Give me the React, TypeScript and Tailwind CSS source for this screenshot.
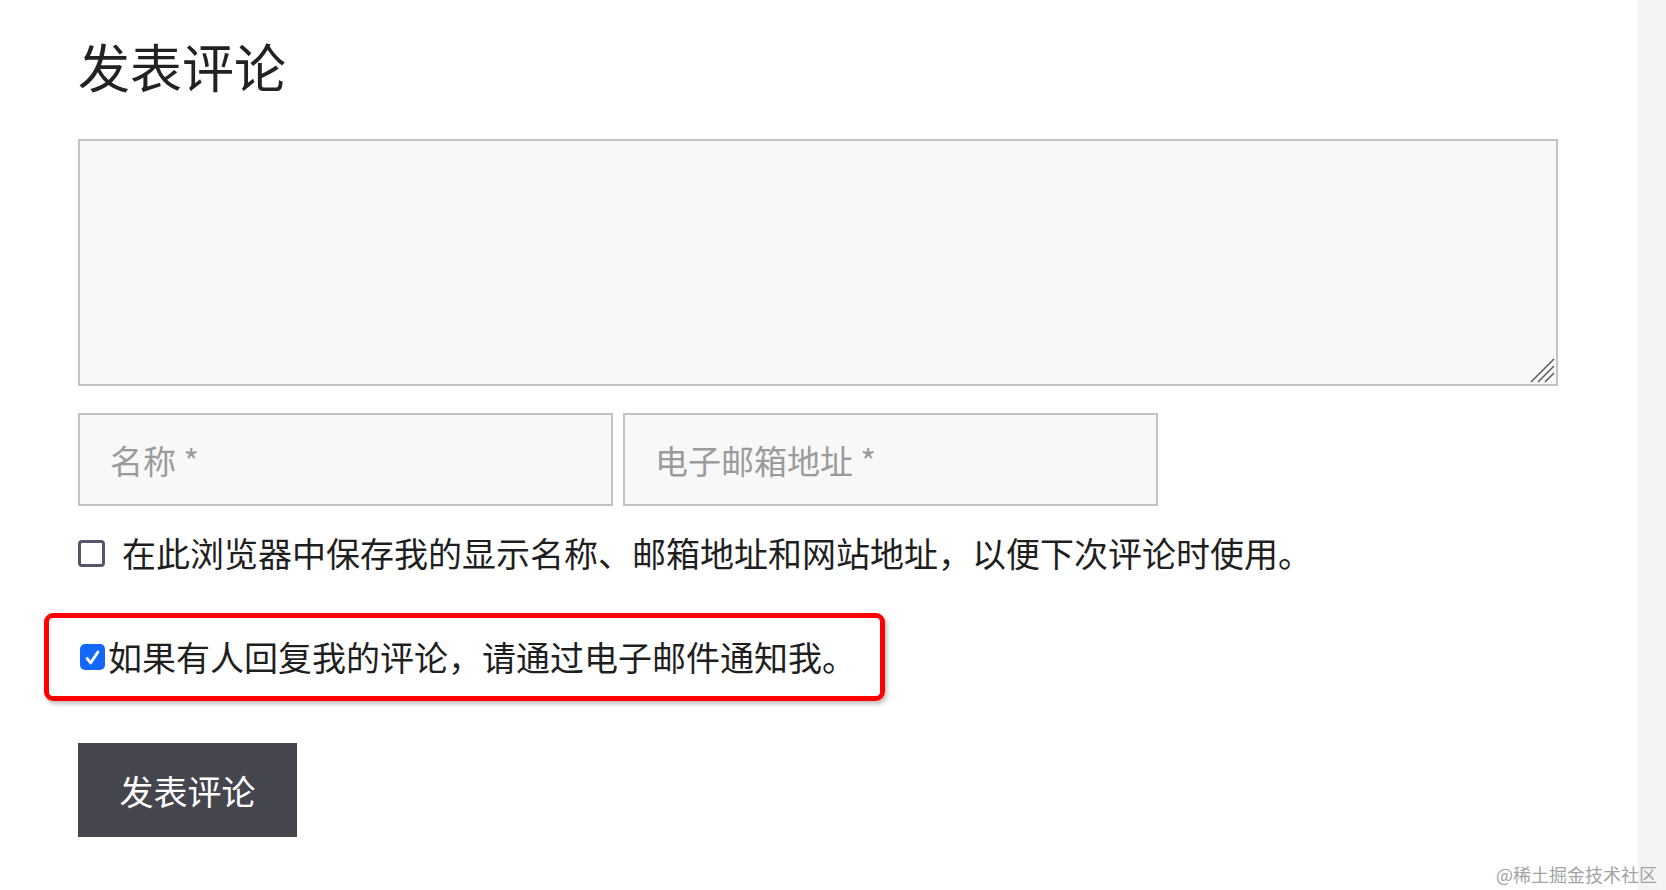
import { useState } from 'react';

const fontStack = '[font-family:"Noto_Sans_CJK_SC","Noto_Sans",sans-serif]';

const ResizeGrip = () => (
  <svg
    className="pointer-events-none absolute right-[3px] bottom-[3px]"
    width="26"
    height="26"
    viewBox="0 0 26 26"
  >
    <path
      d="M2 25 L25 2 M9 25 L25 9 M16 25 L25 16"
      stroke="#5f5f5f"
      strokeWidth="1.6"
      fill="none"
    />
  </svg>
);

const App = () => {
  const [save, setSave] = useState(false);
  const [notify, setNotify] = useState(true);

  return (
    <div className={`relative flex min-h-screen bg-white text-[#1f1f1f] ${fontStack}`}>
      <main className="flex-1 pt-[35px] pr-[80px] pl-[78px]">
        <h3 className="text-[52px] leading-[62px] font-normal text-[#222]">发表评论</h3>

        <div className="relative mt-[42px]">
          <textarea
            className="block h-[247px] w-full resize-none border-2 border-[#c3c3c3] bg-[#f8f8f8] p-4
              text-[32px] outline-none"
          />
          <ResizeGrip />
        </div>

        <div className="mt-[27px] flex gap-[10px]">
          <input
            placeholder="名称 *"
            className="h-[93px] w-[535px] border-2 border-[#c3c3c3] bg-[#f8f8f8] pl-[30px] text-[33px]
              outline-none placeholder:text-[#9b9b9b]"
          />
          <input
            placeholder="电子邮箱地址 *"
            className="h-[93px] w-[535px] border-2 border-[#c3c3c3] bg-[#f8f8f8] pl-[30px] text-[33px]
              outline-none placeholder:text-[#9b9b9b]"
          />
        </div>

        <label
          className="mt-[25px] flex h-[44px] cursor-pointer items-center gap-[17px] text-[34px] leading-[44px]"
          onClick={() => setSave(!save)}
        >
          <span
            className="box-border flex h-[27px] w-[27px] shrink-0 items-center justify-center rounded-[4px]
              border-[3px] border-[#55566a] bg-white"
          >
            {save && (
              <svg width="16" height="16" viewBox="0 0 16 16">
                <path d="M3 8.5 L6.5 12 L13 4" stroke="#55566a" strokeWidth="2.4" fill="none" />
              </svg>
            )}
          </span>
          <span>在此浏览器中保存我的显示名称、邮箱地址和网站地址，以便下次评论时使用。</span>
        </label>

        <div
          className="mt-[38px] -ml-[34px] flex h-[88px] w-[841px] items-center rounded-[9px] border-[5px]
            border-[#ff0000] pl-[31px] shadow-[2px_3px_4px_rgba(0,0,0,0.25)]"
        >
          <label
            className="flex cursor-pointer items-center gap-[3px] text-[34px] leading-[44px]"
            onClick={() => setNotify(!notify)}
          >
            <span
              className={`flex h-[26px] w-[25px] shrink-0 items-center justify-center rounded-[5px] ${
                notify ? 'bg-[#1467fb]' : 'border-2 border-[#55566a] bg-white'
              }`}
            >
              {notify && (
                <svg width="19" height="19" viewBox="0 0 16 16">
                  <path
                    d="M3.4 8.8 L6.4 12.6 L12.6 3.4"
                    stroke="white"
                    strokeWidth="2.4"
                    strokeLinecap="round"
                    strokeLinejoin="round"
                    fill="none"
                  />
                </svg>
              )}
            </span>
            <span>如果有人回复我的评论，请通过电子邮件通知我。</span>
          </label>
        </div>

        <button
          className="mt-[42px] flex h-[94px] w-[219px] items-center justify-center bg-[#45454d] text-[34px]
            text-white"
        >
          发表评论
        </button>
      </main>

      <div className="w-[28px] shrink-0 bg-[#f3f4f6]" />

      <span className="absolute right-[9px] bottom-[5px] text-[18px] leading-[22px] text-[#a3a3a3]">
        @稀土掘金技术社区
      </span>
    </div>
  );
};

export default App;
